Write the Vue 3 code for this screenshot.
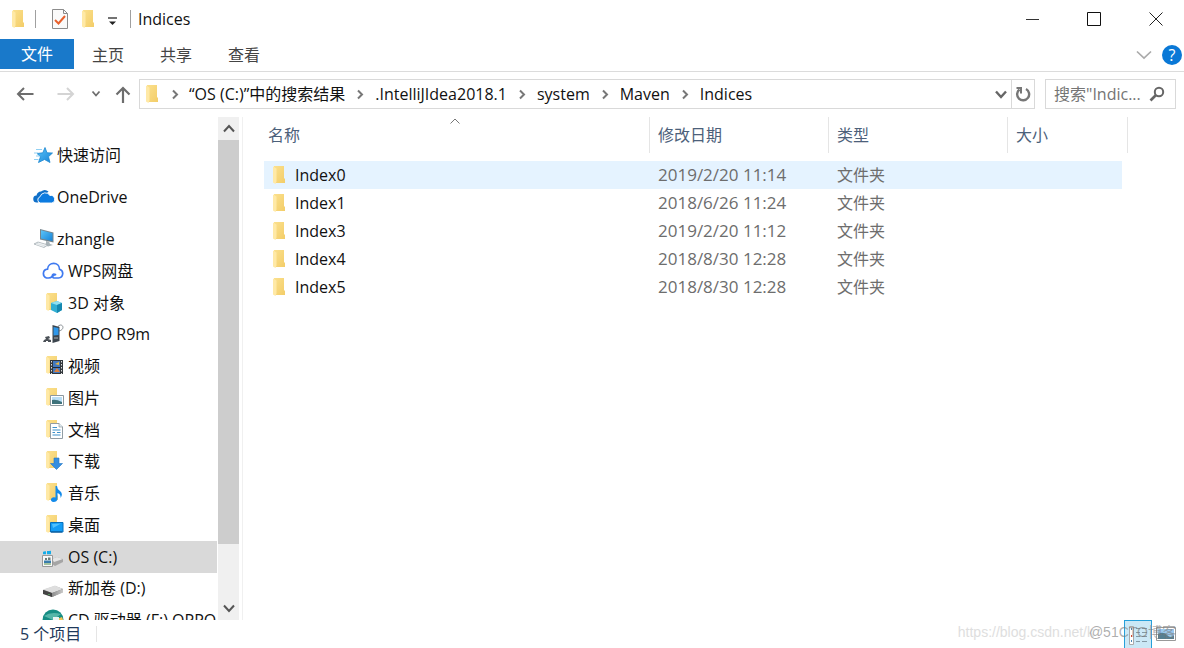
<script setup>
const tabs = ['主页', '共享', '查看']
const crumbs = ['“OS (C:)”中的搜索结果', '.IntelliJIdea2018.1', 'system', 'Maven', 'Indices']
const roots = [
  { icon: 'star', label: '快速访问' },
  { icon: 'onedrive', label: 'OneDrive' },
  { icon: 'pc', label: 'zhangle' },
]
const places = [
  { icon: 'wps', label: 'WPS网盘' },
  { icon: 'cube', label: '3D 对象', folder: true },
  { icon: 'phone', label: 'OPPO R9m' },
  { icon: 'video', label: '视频', folder: true },
  { icon: 'picture', label: '图片', folder: true },
  { icon: 'document', label: '文档', folder: true },
  { icon: 'download', label: '下载', folder: true },
  { icon: 'music', label: '音乐', folder: true },
  { icon: 'desktop', label: '桌面', folder: true },
  { icon: 'osdrive', label: 'OS (C:)', selected: true },
  { icon: 'drive', label: '新加卷 (D:)' },
  { icon: 'disc', label: 'CD 驱动器 (F:) OPPO' },
]
const files = [
  { name: 'Index0', date: '2019/2/20 11:14', type: '文件夹' },
  { name: 'Index1', date: '2018/6/26 11:24', type: '文件夹' },
  { name: 'Index3', date: '2019/2/20 11:12', type: '文件夹' },
  { name: 'Index4', date: '2018/8/30 12:28', type: '文件夹' },
  { name: 'Index5', date: '2018/8/30 12:28', type: '文件夹' },
]
</script>

<template>
  <div class="window">
    <svg class="defs" width="0" height="0" aria-hidden="true">
      <defs>
        <linearGradient id="gold" x1="0" y1="0" x2="1" y2="1">
          <stop offset="0" stop-color="#fbe08d" /><stop offset="1" stop-color="#f3cd68" />
        </linearGradient>
        <linearGradient id="sky" x1="0" y1="0" x2="1" y2="1">
          <stop offset="0" stop-color="#5cc4f8" /><stop offset="1" stop-color="#1583d8" />
        </linearGradient>
        <linearGradient id="metal" x1="0" y1="0" x2="1" y2="0">
          <stop offset="0" stop-color="#8c8c8c" /><stop offset="1" stop-color="#c9c9c9" />
        </linearGradient>
      </defs>
      <symbol id="folder" viewBox="0 0 14 20">
        <path d="M2 1H12V13L13 14V18H3Z" fill="url(#gold)" />
        <path d="M1 1.500L4.500 3.500V16.500L3.500 19L1 17.500Z" fill="#ffe9a6" />
      </symbol>
      <symbol id="star" viewBox="0 0 22 22">
        <path d="M12 3.500L14 8.800L19.500 9L15.500 12.700L17 18.500L11.500 15.500L5.500 18.500L7.500 12.700L4 9.500L9.800 8.800Z" fill="url(#sky)" stroke="#1c86cf" stroke-width="0.800" />
        <path d="M3 5.500H9M1 9H5M3 12H6.500M1 15.500H5.500" stroke="#90d0f3" />
      </symbol>
      <symbol id="onedrive" viewBox="0 0 22 22">
        <path d="M5 16.500H4A3.500 3.500 0 0 1 3.500 9.500A5 5 0 0 1 8 5.500A6 6 0 0 1 15.500 5.500" fill="#0f6fc8" />
        <path d="M7.500 17A3.200 3.200 0 0 1 7 10.800A5.500 5.500 0 0 1 17 9.500A3.800 3.800 0 0 1 18.500 17Z" fill="#0c7be0" stroke="#fff" stroke-width="0.900" />
      </symbol>
      <symbol id="pc" viewBox="0 0 22 22">
        <path d="M7 1L20.500 4.500V14.500L7 11.500Z" fill="#75858e" />
        <path d="M8 2.300L19.500 5.300V13L8 10.500Z" fill="url(#sky)" />
        <path d="M13 13L16 13.500L17 16L20 17L15 18.500L11 16.500L13 15.500Z" fill="#aab4b9" />
        <path d="M1 16L5 14L15 17L11 19.500Z" fill="#d9dfe2" stroke="#9da7ad" stroke-width="0.700" />
        <path d="M3 16.200L11 18.500M5 15L13 17.300" stroke="#fff" stroke-width="0.600" />
      </symbol>
      <symbol id="wps" viewBox="0 0 22 22">
        <path d="M13.500 14.500C9.500 12.500 9.500 18 12 18H16.500A4.500 4.500 0 0 0 17.500 9.200C17.500 1.500 6 1.500 5.500 9.200C.5 9.500 0 16.500 4.500 18H6.500C10 18 10.500 15.500 13.500 14.500" fill="none" stroke="#3f7af0" stroke-width="1.700" stroke-linecap="round" />
      </symbol>
      <symbol id="cube" viewBox="0 0 22 22">
        <path d="M9 11L15 9L20 11V18L15 21L9 18Z" fill="#32afd2" />
        <path d="M9 11L15 9L20 11L15 13Z" fill="#91e0f0" /><path d="M15 13L20 11V18L15 21Z" fill="#1688b0" />
      </symbol>
      <symbol id="phone" viewBox="0 0 22 22">
        <path d="M17 8C22 7 22 2 18.500 2Q16 2 15.500 5" fill="none" stroke="#8b9297" stroke-width="1" />
        <path d="M10.500 2L17.500 4V18L10.500 20Z" fill="#3c454d" /><path d="M11.500 4L16.500 5V12L11.500 12.500Z" fill="#2e96e8" />
        <path d="M12 15H16" stroke="#a9b0b5" /><path d="M3 14L7 13L8 15L6 16L9 17V19H6V18H4V19H1L2 17L4 16Z" fill="#4b5157" />
      </symbol>
      <symbol id="video" viewBox="0 0 22 22">
        <path d="M8 5H21V19H8Z" fill="#33383d" /><path d="M11 6H18V18H11Z" fill="#4379bf" />
        <path d="M9.500 6V19M19.500 6V19" stroke="#ddd" stroke-dasharray="1.500 1.500" />
        <path d="M11 12.500H18" stroke="#202b36" /><path d="M13 9L17 7V10Z" fill="#efb93d" /><path d="M12 17L15 13L18 17Z" fill="#dc813c" />
      </symbol>
      <symbol id="picture" viewBox="0 0 22 22">
        <path d="M8.500 8.500H21.500V18.500H8.500Z" fill="#fff" stroke="#8d999f" /><path d="M10 10H20V17H10Z" fill="#b9def5" />
        <path d="M10 13Q14 12 20 15V17H10Z" fill="#3e727b" />
      </symbol>
      <symbol id="document" viewBox="0 0 22 22">
        <path d="M8.500 4.500H17L20.500 8V19.500H8.500Z" fill="#fff" stroke="#929da4" />
        <path d="M17 4V8H21" fill="#dce7ed" stroke="#929da4" stroke-width="0.700" />
        <path d="M10.500 8.500H15M10.500 11H18.500M10.500 13.500H13M15 13.500H18.500M10.500 16H18.500" stroke="#3d91ca" />
      </symbol>
      <symbol id="download" viewBox="0 0 22 22">
        <path d="M12 8H17V13.500H20.500L14.500 19.500L8.500 13.500H12Z" fill="#348ee0" stroke="#2377c5" stroke-width="0.600" />
      </symbol>
      <symbol id="music" viewBox="0 0 22 22">
        <path d="M13.500 4H15Q15 7 18 9Q21.500 12 18.500 16Q19 12 15.500 11V17Q15 20 11.500 20Q8.500 19.500 9 17Q10 14.500 13.500 15.500Z" fill="#138bea" />
      </symbol>
      <symbol id="desktop" viewBox="0 0 22 22">
        <path d="M8.500 8.500H21V18H8.500Z" fill="#139cf5" stroke="#0670bd" /><path d="M10 10L19 9.500L11 14Z" fill="#4fc1ff" />
        <path d="M9 18H20" stroke="#074f8a" />
      </symbol>
      <symbol id="drive" viewBox="0 0 22 22">
        <path d="M1 13L13 9L21 12V15L10 20L1 16Z" fill="#777" /><path d="M1 12.500L13 8.500L21 12L10 16Z" fill="#dedede" />
        <path d="M1 13L10 16V20L1 17Z" fill="#444" /><path d="M10 16L21 12V15.500L10 20Z" fill="url(#metal)" /><path d="M7 17V18" stroke="#64e46f" />
      </symbol>
      <symbol id="osdrive" viewBox="0 0 22 22">
        <path d="M10 13L15 11L21 13V16L13 20L10 18Z" fill="#a5a5a5" /><path d="M10 13L15 11L21 13L12 16Z" fill="#e5e5e5" />
        <path d="M1 6L4 5.500V8.200H1ZM5 5.300L9 4.800V8.200H5ZM1 9H4V11.500L1 11ZM5 9H9V11.500H5Z" fill="#16ace8" />
        <path d="M.5 9.500H10.500V20.500H.5Z" fill="#f8f8f8" stroke="#999" />
        <path d="M1.500 5.500H4V8H1.500ZM5 5H8.500V8H5Z" fill="#16ace8" />
        <path d="M3 12H5V14H3ZM6 11.500H8.500V14H6Z" fill="#6b7d79" /><path d="M2 14.500H9V17H2Z" fill="#397cab" /><path d="M2 18H9" stroke="#518c47" />
      </symbol>
      <symbol id="disc" viewBox="0 0 22 22">
        <circle cx="11" cy="11" r="10.500" fill="#168d84" /><path d="M2 7Q9 2 19 5L11 11Z" fill="#55b6a9" />
        <path d="M10 12L20 8L21.500 12L19 18L10 20Z" fill="#f3c252" /><path d="M11 8H17V11H11Z" fill="#e8f4f3" />
      </symbol>
      <symbol id="chev" viewBox="0 0 12 12"><path d="M4 2.500L8 6.500L4 10.500" fill="none" stroke="#777" stroke-width="2" /></symbol>
    </svg>

    <header class="title">
      <svg class="folder"><use href="#folder" /></svg>
      <i class="bar"></i>
      <button class="plain check" aria-label="属性">
        <svg width="16" height="20" viewBox="0 0 16 20"><path d="M.5 .5H11.500L15.500 4.500V19.500H.5Z" fill="#fafafa" stroke="#8c8c8c" /><path d="M11.500 .5V4.500H15.500" fill="none" stroke="#8c8c8c" /><path d="M3 11L6.500 14.500L13 7" fill="none" stroke="#e8602c" stroke-width="2" /></svg>
      </button>
      <button class="plain new" aria-label="新建文件夹"><svg class="folder"><use href="#folder" /></svg></button>
      <button class="plain more" aria-label="自定义快速访问工具栏">
        <svg width="9" height="9" viewBox="0 0 9 9"><path d="M0 1H9" stroke="#444" stroke-width="1.500" /><path d="M1 4.500H8L4.500 8Z" fill="#222" /></svg>
      </button>
      <i class="bar last"></i>
      <h1>Indices</h1>
      <div class="controls">
        <button class="plain" aria-label="最小化"><svg width="14" height="14" viewBox="0 0 14 14"><path d="M1 7.500H14" stroke="#333" /></svg></button>
        <button class="plain" aria-label="最大化"><svg width="14" height="14" viewBox="0 0 14 14"><path d="M.5 .5H13.500V13.500H.5Z" fill="none" stroke="#111" /></svg></button>
        <button class="plain" aria-label="关闭"><svg width="14" height="14" viewBox="0 0 14 14"><path d="M.5 .5L13.500 13.500M13.500 .5L.5 13.500" stroke="#222" /></svg></button>
      </div>
    </header>

    <nav class="ribbon">
      <button class="tab file">文件</button>
      <button v-for="t in tabs" :key="t" class="tab">{{ t }}</button>
      <button class="plain expand" aria-label="展开功能区"><svg width="16" height="10" viewBox="0 0 16 10"><path d="M1 1.500L8 8L15 1.500" fill="none" stroke="#aaa" stroke-width="1.700" /></svg></button>
      <button class="help" aria-label="帮助">?</button>
    </nav>

    <div class="toolbar">
      <button class="plain nav-back" aria-label="后退"><svg width="18" height="16" viewBox="0 0 18 16"><path d="M17.500 8H2M8 2L2 8L8 14" fill="none" stroke="#6d6d6d" stroke-width="2" /></svg></button>
      <button class="plain nav-fwd" aria-label="前进"><svg width="18" height="16" viewBox="0 0 18 16"><path d="M.5 8H16M10 2L16 8L10 14" fill="none" stroke="#d4d4d4" stroke-width="2" /></svg></button>
      <button class="plain nav-recent" aria-label="最近位置"><svg width="10" height="8" viewBox="0 0 10 8"><path d="M1.500 1.500L5 5.500L8.500 1.500" fill="none" stroke="#6d6d6d" stroke-width="1.800" /></svg></button>
      <button class="plain nav-up" aria-label="上移"><svg width="16" height="17" viewBox="0 0 16 17"><path d="M8 17V2M1.500 8.500L8 2L14.500 8.500" fill="none" stroke="#6d6d6d" stroke-width="2.200" /></svg></button>
      <div class="address">
        <svg class="folder"><use href="#folder" /></svg>
        <template v-for="c in crumbs" :key="c">
          <svg class="chev"><use href="#chev" /></svg>
          <a href="#" class="crumb">{{ c }}</a>
        </template>
        <button class="plain drop" aria-label="以前的位置"><svg width="12" height="9" viewBox="0 0 12 9"><path d="M1 1.500L6 7L11 1.500" fill="none" stroke="#666" stroke-width="2.400" /></svg></button>
        <button class="plain refresh" aria-label="刷新"><svg width="16" height="16" viewBox="0 0 16 16"><path d="M11 3A6 6 0 1 1 4.500 3.500" fill="none" stroke="#777" stroke-width="2.400" /><path d="M1.500 2H6V7.500" fill="none" stroke="#777" stroke-width="2" /></svg></button>
      </div>
      <label class="search">
        <input type="text" placeholder="搜索&quot;Indic..." aria-label="搜索" />
        <svg width="16" height="16" viewBox="0 0 16 16"><circle cx="10" cy="6" r="4.200" fill="none" stroke="#666" stroke-width="2" /><path d="M7 9L1.500 14.500" stroke="#666" stroke-width="2.600" /></svg>
      </label>
    </div>

    <main class="body">
      <aside class="side">
        <div class="tree">
          <ul class="roots">
            <li v-for="r in roots" :key="r.label"><svg class="icon"><use :href="'#' + r.icon" /></svg><span>{{ r.label }}</span></li>
          </ul>
          <ul class="places">
            <li v-for="p in places" :key="p.label" :class="{ selected: p.selected }">
              <svg class="icon" viewBox="0 0 22 22">
                <use v-if="p.folder" href="#folder" x="3" y="0" width="14" height="20" />
                <use :href="'#' + p.icon" width="22" height="22" />
              </svg>
              <span>{{ p.label }}</span>
            </li>
          </ul>
        </div>
        <div class="scroll">
          <button class="plain" aria-label="向上滚动"><svg width="12" height="9" viewBox="0 0 12 9"><path d="M1 7.500L6 2L11 7.500" fill="none" stroke="#555" stroke-width="2" /></svg></button>
          <div class="track"><div class="thumb"></div></div>
          <button class="plain" aria-label="向下滚动"><svg width="12" height="9" viewBox="0 0 12 9"><path d="M1 1.500L6 7L11 1.500" fill="none" stroke="#555" stroke-width="2" /></svg></button>
        </div>
      </aside>

      <section class="content">
        <table>
          <colgroup><col /><col class="mid" /><col class="mid" /><col class="size" /></colgroup>
          <thead>
            <tr>
              <th><div>名称<svg class="sort" width="10" height="6" viewBox="0 0 10 6"><path d="M.5 5.500L5 1L9.500 5.500" fill="none" stroke="#777" /></svg></div></th>
              <th><div>修改日期</div></th>
              <th><div>类型</div></th>
              <th><div>大小</div></th>
            </tr>
          </thead>
          <tbody>
            <tr v-for="(f, i) in files" :key="f.name" :class="{ hover: i === 0 }">
              <td><div class="name"><svg class="folder"><use href="#folder" /></svg>{{ f.name }}</div></td>
              <td class="date">{{ f.date }}</td>
              <td class="type">{{ f.type }}</td>
              <td class="end"></td>
            </tr>
          </tbody>
        </table>
      </section>
    </main>

    <footer class="status">
      <span>5 个项目</span>
      <i class="sep"></i>
      <div class="views">
        <button class="plain details" aria-label="详细信息"><svg width="20" height="20" viewBox="0 0 20 20"><path d="M1.500 1.500H5.500V19.500H1.500Z" fill="#fff" stroke="#aaa" /><path d="M8 3.500H12M14 3.500H19M8 7.500H12M14 7.500H19M8 11.500H12M14 11.500H19M8 16.500H12M14 16.500H19" stroke="#8499a5" /><path d="M3 4H4M3 16H4" stroke="#4a87b5" stroke-width="2" /><path d="M3 11H4" stroke="#c94832" stroke-width="2" /></svg></button>
        <button class="plain" aria-label="大图标"><svg width="20" height="14" viewBox="0 0 20 14"><path d="M.5 .5H19.500V13.500H.5Z" fill="#fff" stroke="#999" /><path d="M2 2H18V12H2Z" fill="#9ac9ee" /><path d="M2 7Q7 4 11 8T18 8V12H2Z" fill="#557f91" /></svg></button>
      </div>
      <span class="mark link">https://blog.csdn.net/k</span>
      <span class="mark brand">@51CTO博客</span>
    </footer>
  </div>
</template>

<style>
body { background: #fff; }
</style>

<style scoped>
.window { display: flex; flex-direction: column; height: 100vh; overflow: hidden; background: #fff; color: #111; font: 16px/24px "Open Sans", "Noto Sans CJK SC", sans-serif; }
.defs { position: absolute; }
button, input { font: inherit; color: inherit; border: 0; padding: 0; margin: 0; background: none; }
.plain { display: flex; align-items: center; justify-content: center; }
svg { display: block; flex: none; }
.folder { width: 14px; height: 20px; }
ul { list-style: none; margin: 0; padding: 0; }

.title { display: flex; align-items: center; height: 38px; padding: 0 21px 1px 11px; }
.bar { width: 1px; height: 18px; margin-left: 10px; background: #a0a0a0; }
.check { margin-left: 16px; }
.new { margin-left: 13px; }
.more { margin-left: 13px; padding-top: 5px; }
.bar.last { margin-left: 13px; }
h1 { flex: 1; margin: 0 0 0 7px; font-size: 16px; font-weight: 400; }
.controls { display: flex; gap: 48px; }

.ribbon { display: flex; align-items: center; height: 32px; padding-right: 2px; border-bottom: 1px solid #dcdcdc; }
.tab { width: 68px; height: 32px; color: #444; }
.tab.file { width: 74px; height: 30px; align-self: flex-start; background: #1979ca; color: #fff; }
.expand { margin-left: auto; }
.help { width: 20px; height: 20px; margin-left: 10px; border-radius: 50%; background: #0a78d6; color: #fff; font-size: 16px; line-height: 20px; }

.toolbar { display: flex; align-items: center; height: 30px; padding: 7px 8px 8px 16px; }
.nav-fwd { margin-left: 23px; }
.nav-recent { margin-left: 16px; }
.nav-up { margin-left: 14px; }
.address { display: flex; flex: 1; align-items: center; height: 28px; margin-left: 8px; padding-left: 5px; border: 1px solid #d9d9d9; }
.chev { width: 12px; height: 12px; margin: 0 9px; }
.address .folder + .chev { margin: 0 8px 0 10px; }
.crumb { color: #111; text-decoration: none; white-space: nowrap; }
.drop { width: 20px; margin-left: auto; }
.refresh { width: 23px; height: 28px; border-left: 1px solid #d9d9d9; }
.search { display: flex; align-items: center; width: 121px; height: 28px; margin-left: 10px; padding-left: 8px; border: 1px solid #d9d9d9; }
.search input { flex: 1; min-width: 0; outline: 0; }
.search input::placeholder { color: #757575; opacity: 1; }
.search svg { margin-right: 10px; }

.body { display: flex; flex: 1; min-height: 0; }
.side { display: flex; width: 239px; border-right: 1px solid #fff; }
.tree { width: 217px; overflow: hidden; }
.roots { display: grid; grid-auto-rows: 32px; row-gap: 10px; padding-top: 22px; }
.tree li { display: flex; align-items: center; white-space: nowrap; }
.icon { width: 22px; height: 22px; }
.roots li { padding-left: 33px; gap: 2px; }
.places { display: grid; grid-auto-rows: 1fr; height: 381px; }
.places li { padding-left: 42px; gap: 4px; }
.selected { background: #d9d9d9; }
.scroll { display: flex; flex-direction: column; width: 21px; margin-left: 1px; background: #f0f0f0; }
.scroll button { height: 23px; }
.track { flex: 1; }
.thumb { height: 404px; background: #cdcdcd; }

.content { flex: 1; padding-left: 21px; padding-right: 56px; margin-left: 2px; border-left: 1px solid #f0f0f0; }
table { width: 100%; table-layout: fixed; border-collapse: collapse; }
.mid { width: 179px; }
.size { width: 120px; }
th { height: 44px; padding: 0; text-align: left; vertical-align: top; font-weight: 400; color: #4c607a; }
th div { position: relative; height: 36px; line-height: 36px; padding-left: 8px; border-right: 1px solid #e5e5e5; }
th:first-child div { padding-left: 4px; }
.sort { position: absolute; top: 1px; left: 50%; margin-left: -7px; }
td { height: 28px; padding: 0 0 0 8px; color: #6d6d6d; }
td:first-child { color: #111; }
.name { display: flex; align-items: center; gap: 9px; }
.date { font-size: 17px; }
.hover td { background: #e5f3ff; }
.hover .end { padding: 0 6px 0 0; background-clip: content-box; }

.status { position: relative; display: flex; align-items: center; height: 28px; padding-left: 20px; color: #1e395b; }
.sep { width: 1px; height: 16px; margin-left: 15px; background: #e5e5e5; }
.views { display: flex; align-items: center; gap: 4px; margin-left: auto; padding-right: 8px; }
.details { width: 28px; height: 28px; border: 1px solid #26a0da; border-bottom: 0; background: #cbe8f6; }
.mark { position: absolute; white-space: nowrap; pointer-events: none; }
.link { right: 90px; bottom: 4px; font: 14px/24px "Liberation Sans", sans-serif; color: #dedede; }
.brand { right: 8px; bottom: 4px; font: 14px/24px "Liberation Sans", "Noto Sans CJK SC", sans-serif; color: rgba(120, 120, 120, 0.6); }
</style>
